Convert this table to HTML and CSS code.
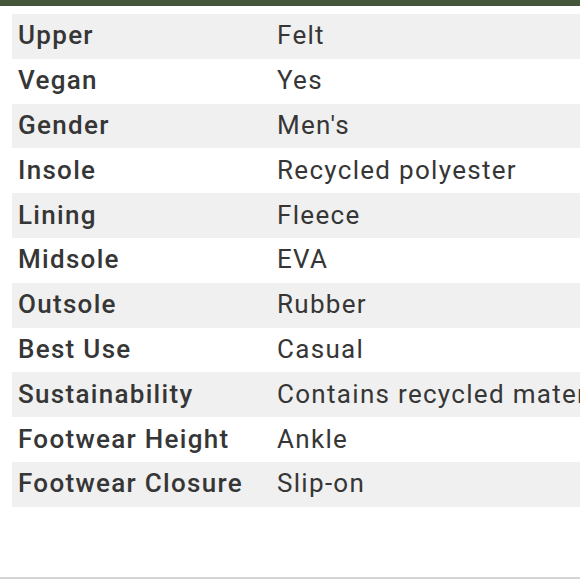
FILE: index.html
```html
<!DOCTYPE html>
<html>
<head>
<meta charset="utf-8">
<link rel="stylesheet" href="styles.css">
</head>
<body>
<div class="page">
  <div class="topbar"></div>
  <div class="content">
    <table class="specs">
      <tbody>
        <tr><th>Upper</th><td>Felt</td></tr>
        <tr><th>Vegan</th><td>Yes</td></tr>
        <tr><th>Gender</th><td>Men's</td></tr>
        <tr><th>Insole</th><td>Recycled polyester</td></tr>
        <tr><th>Lining</th><td>Fleece</td></tr>
        <tr><th>Midsole</th><td>EVA</td></tr>
        <tr><th>Outsole</th><td>Rubber</td></tr>
        <tr><th>Best Use</th><td>Casual</td></tr>
        <tr><th>Sustainability</th><td>Contains recycled materials</td></tr>
        <tr><th>Footwear Height</th><td>Ankle</td></tr>
        <tr><th>Footwear Closure</th><td>Slip-on</td></tr>
      </tbody>
    </table>
  </div>
  <div class="bottomline"></div>
</div>
</body>
</html>
```
FILE: styles.css
```css
html, body {
  margin: 0;
  padding: 0;
  background: #ffffff;
  overflow: hidden;
}
.page {
  width: 580px;
  height: 579px;
  display: flex;
  flex-direction: column;
  overflow: hidden;
  font-family: Roboto, "Liberation Sans", sans-serif;
  color: #363636;
}
.topbar {
  height: 6px;
  background: #45573a;
  flex: none;
}
.content {
  flex: 1;
  padding: 8px 0 0 12px;
  overflow: hidden;
}
.specs {
  border-collapse: collapse;
  width: 760px;
  white-space: nowrap;
}
.specs tr {
  height: 44.8px;
}
.specs tr:nth-child(odd) {
  background: #f0f0f0;
}
.specs th,
.specs td {
  padding: 0 0 2px 6px;
  font-size: 26px;
  letter-spacing: 1.3px;
  text-align: left;
  vertical-align: middle;
}
.specs th {
  font-weight: 500;
  width: 253px;
}
.specs td {
  font-weight: 400;
}
.bottomline {
  height: 2px;
  background: #d4d4d4;
  flex: none;
}
```
